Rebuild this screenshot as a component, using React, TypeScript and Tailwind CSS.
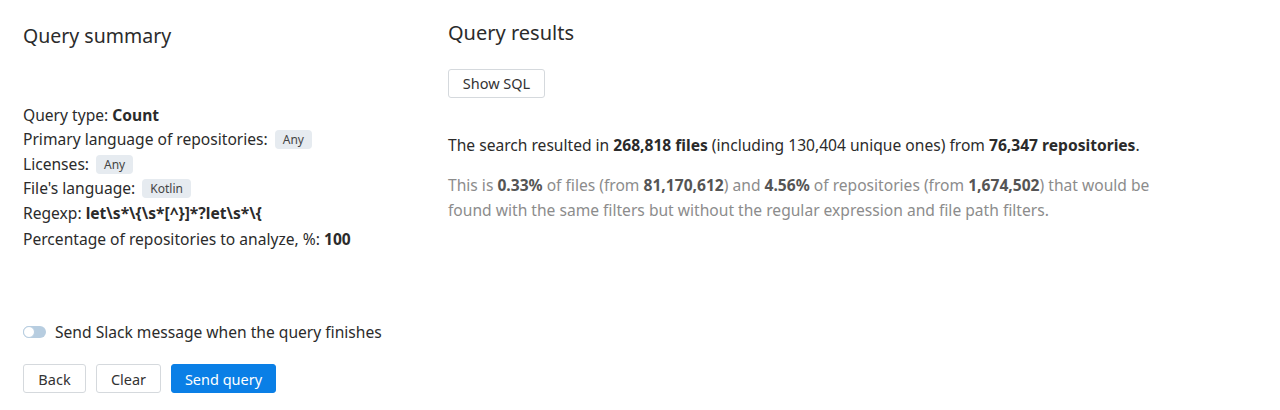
import React from 'react';

const Badge: React.FC<{ children: React.ReactNode }> = ({ children }) => (
  <span className="ml-[7px] inline-block rounded bg-[#e6ebf0] px-[8px] py-[2px] align-[1px] text-[12px] leading-[15px] text-[#444]">
    {children}
  </span>
);

const Button: React.FC<{ children: React.ReactNode; primary?: boolean; className?: string }> = ({
  children,
  primary,
  className = '',
}) => (
  <button
    className={`h-[29px] rounded-[3px] border text-[14.5px] leading-none ${
      primary
        ? 'border-[#0a7fe6] bg-[#0a7fe6] text-white'
        : 'border-[#d5d9dd] bg-white text-[#333]'
    } ${className}`}
  >
    {children}
  </button>
);

export default function App() {
  return (
    <div className="flex h-[410px] w-[1280px] bg-white pl-[23px] font-['Noto_Sans',sans-serif] text-[#2b2b2b]">
      {/* Query summary */}
      <div className="flex w-[425px] flex-col">
        <h2 className="mt-[22px] text-[19.5px] leading-[28px]">Query summary</h2>

        <div className="mt-[53px] text-[15.6px] leading-[24.4px]">
          <div>
            Query type: <b>Count</b>
          </div>
          <div>
            Primary language of repositories:<Badge>Any</Badge>
          </div>
          <div>
            Licenses:<Badge>Any</Badge>
          </div>
          <div>
            File's language:<Badge>Kotlin</Badge>
          </div>
          <div>
            Regexp: <b>{'let\\s*\\{\\s*[^}]*?let\\s*\\{'}</b>
          </div>
          <div className="mt-[2px]">
            Percentage of repositories to analyze, %: <b>100</b>
          </div>
        </div>

        <label className="mt-[69px] flex items-center gap-[9px] text-[15.6px] leading-[24px]">
          <span className="relative h-[12px] w-[23px] rounded-full bg-[#b7cde0]">
            <span className="absolute left-0 top-0 h-[12px] w-[12px] rounded-full border border-[#b7cde0] bg-white" />
          </span>
          Send Slack message when the query finishes
        </label>

        <div className="mt-[20px] flex gap-[10px]">
          <Button className="w-[63px]">Back</Button>
          <Button className="w-[65px]">Clear</Button>
          <Button primary className="w-[105px]">
            Send query
          </Button>
        </div>
      </div>

      {/* Query results */}
      <div className="flex flex-col">
        <h2 className="mt-[19px] text-[20px] leading-[28px]">Query results</h2>
        <Button className="mt-[22px] w-[97px]">Show SQL</Button>

        <p className="mt-[35px] text-[15.6px] leading-[25px] text-[#2b2b2b]">
          The search resulted in <b>268,818 files</b> (including 130,404 unique ones) from{' '}
          <b>76,347 repositories</b>.
        </p>
        <p className="mt-[15px] w-[720px] text-[15.6px] leading-[25px] text-[#8c8c8c]">
          This is <b className="text-[#555]">0.33%</b> of files (from <b className="text-[#555]">81,170,612</b>)
          and <b className="text-[#555]">4.56%</b> of repositories (from{' '}
          <b className="text-[#555]">1,674,502</b>) that would be found with the same filters but without the
          regular expression and file path filters.
        </p>
      </div>
    </div>
  );
}
